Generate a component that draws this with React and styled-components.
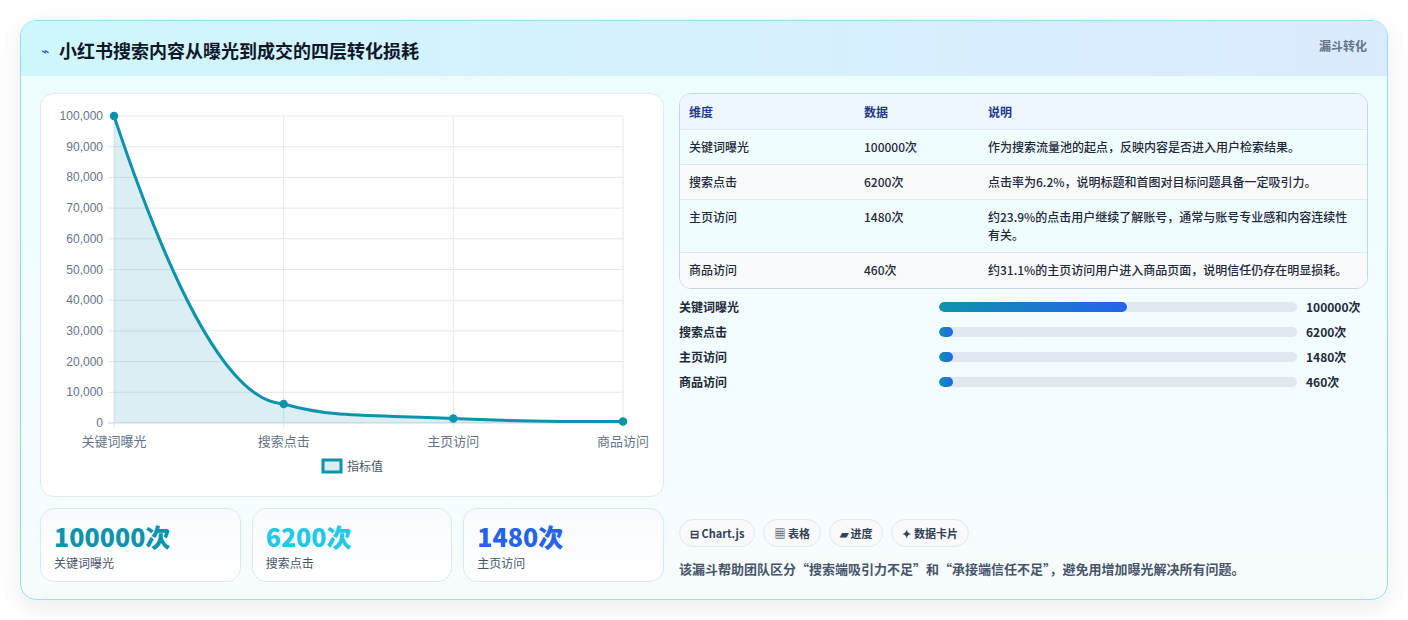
import styled, { createGlobalStyle } from 'styled-components';

const FONT = `"Noto Sans CJK SC", "Noto Sans", sans-serif`;

const Global = createGlobalStyle`
  body { margin: 0; background: #f1f5f9; font-family: ${FONT}; }
  * { box-sizing: border-box; }
`;

const ROWS = [
  { name: '关键词曝光', value: 100000, desc: '作为搜索流量池的起点，反映内容是否进入用户检索结果。' },
  { name: '搜索点击', value: 6200, desc: '点击率为6.2%，说明标题和首图对目标问题具备一定吸引力。' },
  { name: '主页访问', value: 1480, desc: '约23.9%的点击用户继续了解账号，通常与账号专业感和内容连续性有关。' },
  { name: '商品访问', value: 460, desc: '约31.1%的主页访问用户进入商品页面，说明信任仍存在明显损耗。' },
];

const BARS = [52.5, 4, 4, 4];

const CARDS = [
  { v: '100000次', l: '关键词曝光', c: '#0e93ad' },
  { v: '6200次', l: '搜索点击', c: '#22c8e5' },
  { v: '1480次', l: '主页访问', c: '#2563eb' },
];

// chart geometry (inside svg coords)
const X0 = 73, X1 = 582, Y0 = 329, YT = 22;
const xs = [0, 1, 2, 3].map((i) => X0 + ((X1 - X0) * i) / 3);
const yOf = (v) => Y0 - ((Y0 - YT) * v) / 100000;

function Chart() {
  const pts = ROWS.map((r, i) => [xs[i], yOf(r.value)]);
  const line = `M${pts[0][0]},${pts[0][1]} C${pts[0][0] + 50},${pts[0][1] + 150} ${pts[1][0] - 60},${pts[1][1] - 2} ${pts[1][0]},${pts[1][1]} C${pts[1][0] + 50},${pts[1][1] + 14} ${pts[2][0] - 90},${pts[2][1] - 4} ${pts[2][0]},${pts[2][1]} C${pts[2][0] + 60},${pts[2][1] + 3} ${pts[3][0] - 60},${pts[3][1]} ${pts[3][0]},${pts[3][1]}`;
  const area = `${line} L${X1},${Y0} L${X0},${Y0} Z`;
  const ticks = [];
  for (let v = 0; v <= 100000; v += 10000) ticks.push(v);
  return (
    <svg width="622" height="401" viewBox="0 0 622 401">
      {ticks.map((v) => (
        <g key={v}>
          <line x1={X0 - 6} x2={X1} y1={yOf(v)} y2={yOf(v)} stroke={v === 0 ? '#cbd5e1' : '#e5e7eb'} />
          <text x={X0 - 11} y={yOf(v) + 4} textAnchor="end" fontSize="12" fill="#64748b" fontFamily="Liberation Sans, sans-serif">
            {v.toLocaleString('en-US')}
          </text>
        </g>
      ))}
      {xs.map((x, i) => (
        <g key={i}>
          <line x1={x} x2={x} y1={YT} y2={Y0 + 6} stroke="#e5e7eb" />
          <text x={x} y={Y0 + 23} textAnchor="middle" fontSize="13" fill="#64748b" fontFamily={FONT}>{ROWS[i].name}</text>
        </g>
      ))}
      <path d={area} fill="rgba(14,147,173,0.15)" />
      <path d={line} fill="none" stroke="#0e93ad" strokeWidth="3" />
      {pts.map(([x, y], i) => (
        <circle key={i} cx={x} cy={y} r="3.5" fill="#0e93ad" stroke="#0e93ad" strokeWidth="1.5" />
      ))}
      <rect x="282" y="366" width="18" height="12" fill="#dbeef4" stroke="#0e93ad" strokeWidth="3" />
      <text x="306" y="377" fontSize="12" fill="#475569" fontFamily={FONT}>指标值</text>
    </svg>
  );
}

export default function App() {
  return (
    <>
      <Global />
      <Page>
        <Panel>
          <Header>
            <Title><Bolt>⌁</Bolt>小红书搜索内容从曝光到成交的四层转化损耗</Title>
            <Tag>漏斗转化</Tag>
          </Header>
          <Body>
            <LeftCol>
              <ChartCard><Chart /></ChartCard>
              <CardRow>
                {CARDS.map((c) => (
                  <StatCard key={c.l}>
                    <StatValue $color={c.c}>{c.v}</StatValue>
                    <StatLabel>{c.l}</StatLabel>
                  </StatCard>
                ))}
              </CardRow>
            </LeftCol>
            <RightCol>
              <TableWrap>
                <Table>
                  <thead>
                    <tr>
                      <TH $w="175px">维度</TH>
                      <TH $w="124px">数据</TH>
                      <TH>说明</TH>
                    </tr>
                  </thead>
                  <tbody>
                    {ROWS.map((r) => (
                      <TR key={r.name}>
                        <TD>{r.name}</TD>
                        <TD>{r.value}次</TD>
                        <TD>{r.desc}</TD>
                      </TR>
                    ))}
                  </tbody>
                </Table>
              </TableWrap>
              <Bars>
                {ROWS.map((r, i) => (
                  <BarRow key={r.name}>
                    <BarLabel>{r.name}</BarLabel>
                    <Track><Fill style={{ width: `${BARS[i]}%` }} /></Track>
                    <BarValue>{r.value}次</BarValue>
                  </BarRow>
                ))}
              </Bars>
              <Spacer />
              <Chips>
                <Chip>⊟ Chart.js</Chip>
                <Chip>▦ 表格</Chip>
                <Chip>▰ 进度</Chip>
                <Chip>✦ 数据卡片</Chip>
              </Chips>
              <Note>该漏斗帮助团队区分“搜索端吸引力不足”和“承接端信任不足”，避免用增加曝光解决所有问题。</Note>
            </RightCol>
          </Body>
        </Panel>
      </Page>
    </>
  );
}

const Page = styled.div`
  width: 1408px;
  height: 620px;
  padding: 20px 20px 20px 20px;
  background: #ffffff;
`;

const Panel = styled.div`
  width: 1368px;
  height: 580px;
  border: 1px solid #8fe3ef;
  border-radius: 16px;
  overflow: hidden;
  background: linear-gradient(180deg, #ecfeff 0%, #f8fcff 100%);
  box-shadow: 0 8px 24px rgba(15, 23, 42, 0.08);
  display: flex;
  flex-direction: column;
`;

const Header = styled.div`
  height: 55px;
  flex-shrink: 0;
  display: flex;
  align-items: flex-start;
  justify-content: space-between;
  padding: 0 20px;
  background: linear-gradient(90deg, #cff7fd 0%, #dbeafe 100%);
  border-bottom: 1px solid #dbeef6;
`;

const Title = styled.h1`
  margin: 16px 0 0;
  font-size: 18px;
  font-weight: 700;
  color: #0f172a;
  display: flex;
  align-items: center;
  gap: 10px;
`;

const Bolt = styled.span`
  color: #2563eb;
  font-size: 14px;
  font-weight: 400;
`;

const Tag = styled.span`
  margin-top: 16px;
  font-size: 12px;
  font-weight: 700;
  color: #64748b;
`;

const Body = styled.div`
  flex: 1;
  display: flex;
  gap: 15px;
  padding: 17px 19px 19px 19px;
`;

const LeftCol = styled.div`
  width: 624px;
  display: flex;
  flex-direction: column;
  gap: 11px;
`;

const ChartCard = styled.div`
  height: 404px;
  background: #ffffff;
  border: 1px solid #e2e8f0;
  border-radius: 14px;
  overflow: hidden;
`;

const CardRow = styled.div`
  display: grid;
  grid-template-columns: repeat(3, 1fr);
  gap: 11px;
`;

const StatCard = styled.div`
  height: 74px;
  border: 1px solid #dbe7f3;
  border-radius: 14px;
  background: linear-gradient(180deg, #f8fbff, #ffffff);
  padding: 10px 13px;
`;

const StatValue = styled.div`
  font-size: 25px;
  font-weight: 800;
  line-height: 34px;
  color: ${({ $color }) => $color};
`;

const StatLabel = styled.div`
  font-size: 12px;
  color: #475569;
  margin-top: 1px;
`;

const RightCol = styled.div`
  flex: 1;
  display: flex;
  flex-direction: column;
`;

const TableWrap = styled.div`
  border: 1px solid #cbd5e1;
  border-radius: 12px;
  overflow: hidden;
  background: #ffffff;
`;

const Table = styled.table`
  width: 100%;
  border-collapse: collapse;
  font-size: 12px;
`;

const TH = styled.th`
  text-align: left;
  font-weight: 700;
  color: #1e3a8a;
  background: #eef6ff;
  padding: 9px 9px;
  height: 33px;
  width: ${({ $w }) => $w || 'auto'};
`;

const TR = styled.tr`
  border-top: 1px solid #e2e8f0;
  &:nth-child(odd) { background: #f0fdff; }
  &:nth-child(even) { background: #f8fafc; }
`;

const TD = styled.td`
  padding: 8px 9px;
  color: #1e293b;
  font-weight: 500;
  line-height: 18px;
  vertical-align: top;
  height: 35px;
`;

const Bars = styled.div`
  display: flex;
  flex-direction: column;
  gap: 7px;
  margin-top: 9px;
`;

const BarRow = styled.div`
  display: grid;
  grid-template-columns: 260px 358px 1fr;
  align-items: center;
  height: 18px;
`;

const BarLabel = styled.span`
  font-size: 12px;
  font-weight: 600;
  color: #1e293b;
`;

const Track = styled.div`
  height: 10px;
  border-radius: 999px;
  background: #e2e8f0;
  overflow: hidden;
`;

const Fill = styled.div`
  height: 100%;
  border-radius: 999px;
  background: linear-gradient(90deg, #0e93ad, #2563eb);
`;

const BarValue = styled.span`
  padding-left: 9px;
  font-size: 12px;
  font-weight: 700;
  color: #1e293b;
`;

const Spacer = styled.div`
  flex: 1;
`;

const Chips = styled.div`
  display: flex;
  gap: 8px;
`;

const Chip = styled.span`
  height: 28px;
  padding: 0 10px;
  display: flex;
  align-items: center;
  border: 1px solid #e2e8f0;
  border-radius: 999px;
  background: #f8fafc;
  font-size: 11px;
  font-weight: 700;
  color: #334155;
`;

const Note = styled.p`
  margin: 12px 0 4px;
  font-size: 13px;
  font-weight: 600;
  color: #475569;
`;
